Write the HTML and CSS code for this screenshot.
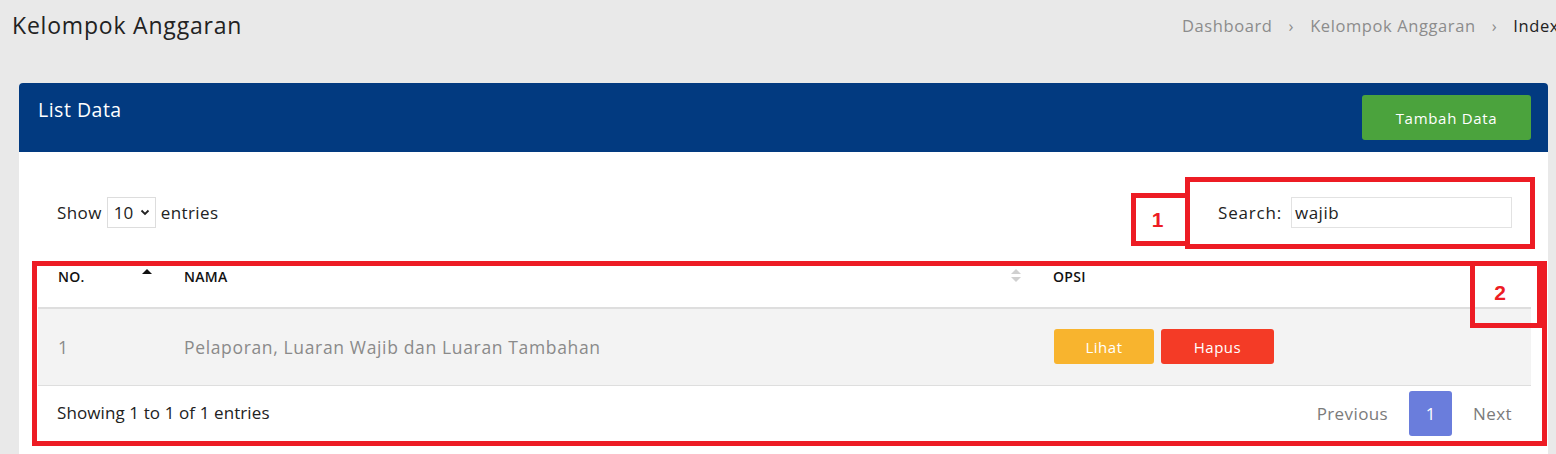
FILE: index.html
```html
<!DOCTYPE html>
<html lang="id">
<head>
<meta charset="utf-8">
<title>Kelompok Anggaran</title>
<link rel="stylesheet" href="styles.css">
</head>
<body>
<div class="page">
  <header class="page-header">
    <h1 class="page-title">Kelompok Anggaran</h1>
    <ol class="breadcrumb">
      <li class="crumb">Dashboard</li>
      <li class="sep">&#8250;</li>
      <li class="crumb">Kelompok Anggaran</li>
      <li class="sep">&#8250;</li>
      <li class="crumb active">Index</li>
    </ol>
  </header>

  <section class="card">
    <div class="card-header">
      <h2 class="card-title">List Data</h2>
      <button class="btn btn-success">Tambah Data</button>
    </div>
    <div class="card-body">
      <div class="controls">
        <label class="length">Show
          <span class="select">10
            <svg class="chev" width="10" height="7" viewBox="0 0 10 7"><path d="M1.5 1.5 L5 5 L8.5 1.5" fill="none" stroke="#222" stroke-width="1.8"/></svg>
          </span>
          entries</label>
        <label class="search">Search:<span class="input">wajib</span></label>
      </div>

      <table class="table">
        <colgroup>
          <col class="c-no">
          <col class="c-nama">
          <col class="c-opsi">
        </colgroup>
        <thead>
          <tr>
            <th class="sorted"><span>NO.</span>
              <svg class="sort" width="12" height="16" viewBox="0 0 12 16"><path d="M1 6 L6 1 L11 6 Z" fill="#111"/></svg>
            </th>
            <th class="sortable"><span>NAMA</span>
              <svg class="sort" width="12" height="16" viewBox="0 0 12 16"><path d="M1 6 L6 1 L11 6 Z" fill="#d0d0d0"/><path d="M1 9 L11 9 L6 14 Z" fill="#d0d0d0"/></svg>
            </th>
            <th><span>OPSI</span></th>
          </tr>
        </thead>
        <tbody>
          <tr>
            <td>1</td>
            <td>Pelaporan, Luaran Wajib dan Luaran Tambahan</td>
            <td class="actions"><button class="btn btn-warning">Lihat</button><button class="btn btn-danger">Hapus</button></td>
          </tr>
        </tbody>
      </table>

      <div class="table-footer">
        <div class="info">Showing 1 to 1 of 1 entries</div>
        <div class="pagination">
          <span class="page-link">Previous</span>
          <span class="page-link current">1</span>
          <span class="page-link">Next</span>
        </div>
      </div>
    </div>
  </section>

  <div class="mark mark-box1"></div>
  <div class="mark mark-label1"><span>1</span></div>
  <div class="mark mark-box2"></div>
  <div class="mark mark-label2"><span>2</span></div>
</div>
</body>
</html>
```

FILE: styles.css
```css
html, body {
  margin: 0;
  padding: 0;
}
body {
  background: #e9e9e9;
  font-family: "Open Sans", "Noto Sans", sans-serif;
  color: #222;
  overflow: hidden;
}
.page {
  position: relative;
  width: 1556px;
  height: 454px;
  overflow: hidden;
}
.page-header {
  display: flex;
  align-items: center;
  height: 50px;
  padding-left: 12px;
  white-space: nowrap;
}
.page-title {
  flex: 0 0 1170px;
  margin: 0;
  font-size: 23px;
  font-weight: 400;
  letter-spacing: 0.8px;
  color: #222;
}
.breadcrumb {
  list-style: none;
  display: flex;
  flex: none;
  margin: 0;
  padding: 0;
  font-size: 16.5px;
  letter-spacing: 0.6px;
}
.crumb { color: #8c8c8c; }
.crumb.active { color: #222; }
.sep {
  color: #8c8c8c;
  padding: 0 16px;
}
.card {
  margin: 33px 8px 0 19px;
  background: #fff;
  border-radius: 4px 4px 0 0;
  min-height: 400px;
}
.card-header {
  background: #023a80;
  height: 69px;
  border-radius: 4px 4px 0 0;
  display: flex;
  justify-content: space-between;
  align-items: flex-start;
  padding: 0 17px 0 19px;
  box-sizing: border-box;
}
.card-title {
  margin: 13px 0 0;
  font-size: 19.5px;
  font-weight: 400;
  letter-spacing: 0.5px;
  color: #fff;
  line-height: 28px;
}
.btn {
  border: 0;
  font-family: inherit;
  color: #fff;
  cursor: pointer;
  border-radius: 3px;
}
.btn-success {
  margin-top: 12px;
  width: 169px;
  height: 45px;
  background: #4ba33d;
  font-size: 15px;
  letter-spacing: 0.7px;
}
.card-body {
  padding: 45px 17px 0 19px;
}
.controls {
  display: flex;
  justify-content: space-between;
  align-items: center;
  height: 31px;
  font-size: 17px;
  letter-spacing: 0.4px;
}
.length {
  display: flex;
  align-items: center;
  gap: 5px;
  padding-left: 19px;
}
.select {
  display: inline-flex;
  align-items: center;
  justify-content: space-between;
  box-sizing: border-box;
  width: 49px;
  height: 31px;
  border: 1px solid #ddd;
  padding: 0 5px 0 6px;
  letter-spacing: 0;
}
.search {
  display: flex;
  align-items: center;
  gap: 9px;
  padding-right: 19px;
  letter-spacing: 0.8px;
}
.input {
  display: inline-flex;
  align-items: center;
  box-sizing: border-box;
  width: 221px;
  height: 31px;
  border: 1px solid #e2e2e2;
  padding: 0 3px;
  letter-spacing: 0.5px;
}
.table {
  width: 1493px;
  margin-top: 38px;
  border-collapse: collapse;
  table-layout: fixed;
}
.c-no { width: 126px; }
.c-nama { width: 869px; }
.c-opsi { width: 498px; }
.table th {
  position: relative;
  text-align: left;
  font-size: 14px;
  font-weight: 600;
  letter-spacing: 0.3px;
  color: #111;
  padding: 1px 20px 20px;
  line-height: 20px;
  border-bottom: 2px solid #dedede;
}
.table th .sort {
  position: absolute;
  right: 11px;
  top: 2px;
}
.table td {
  background: #f3f3f3;
  height: 77px;
  box-sizing: border-box;
  padding: 0 20px;
  font-size: 17.5px;
  letter-spacing: 0.65px;
  color: #8a8a8a;
  border-bottom: 1px solid #dedede;
}
.table td.actions {
  padding-left: 21px;
  letter-spacing: 0;
}
.actions .btn {
  height: 35px;
  font-size: 15px;
  letter-spacing: 0.5px;
  vertical-align: middle;
}
.btn-warning {
  width: 100px;
  background: #f8b42e;
  margin-right: 7px;
}
.btn-danger {
  width: 113px;
  background: #f43b26;
}
.table-footer {
  display: flex;
  justify-content: space-between;
  align-items: flex-start;
  padding: 5px 19px 0 19px;
  width: 1493px;
  box-sizing: border-box;
}
.info {
  font-size: 17px;
  letter-spacing: 0.1px;
  line-height: 40px;
  padding-top: 2px;
}
.pagination {
  display: flex;
  align-items: center;
  font-size: 17px;
  letter-spacing: 0.4px;
  color: #7b7b7b;
}
.page-link {
  line-height: 45px;
  padding: 0 21px;
}
.page-link:last-child { padding-right: 0; }
.page-link.current {
  background: #6a7ddc;
  color: #fff;
  width: 43px;
  padding: 0;
  text-align: center;
  border-radius: 3px;
  letter-spacing: 0;
}

/* annotation marks */
.mark {
  position: absolute;
  border: 5px solid #ed1c24;
  box-sizing: border-box;
}
.mark span {
  position: absolute;
  left: 0;
  text-align: center;
  color: #ed1c24;
  font-family: "Liberation Sans", Arial, sans-serif;
  font-weight: 700;
  font-size: 21px;
}
.mark-box1 { left: 1185px; top: 177px; width: 350px; height: 72px; }
.mark-label1 { left: 1131px; top: 193px; width: 59px; height: 53px; }
.mark-label1 span { top: 10px; right: 6px; }
.mark-box2 { left: 32px; top: 261px; width: 1515px; height: 185px; }
.mark-label2 { left: 1470px; top: 261px; width: 72px; height: 67px; }
.mark-label2 span { top: 15px; right: 12px; }
```
